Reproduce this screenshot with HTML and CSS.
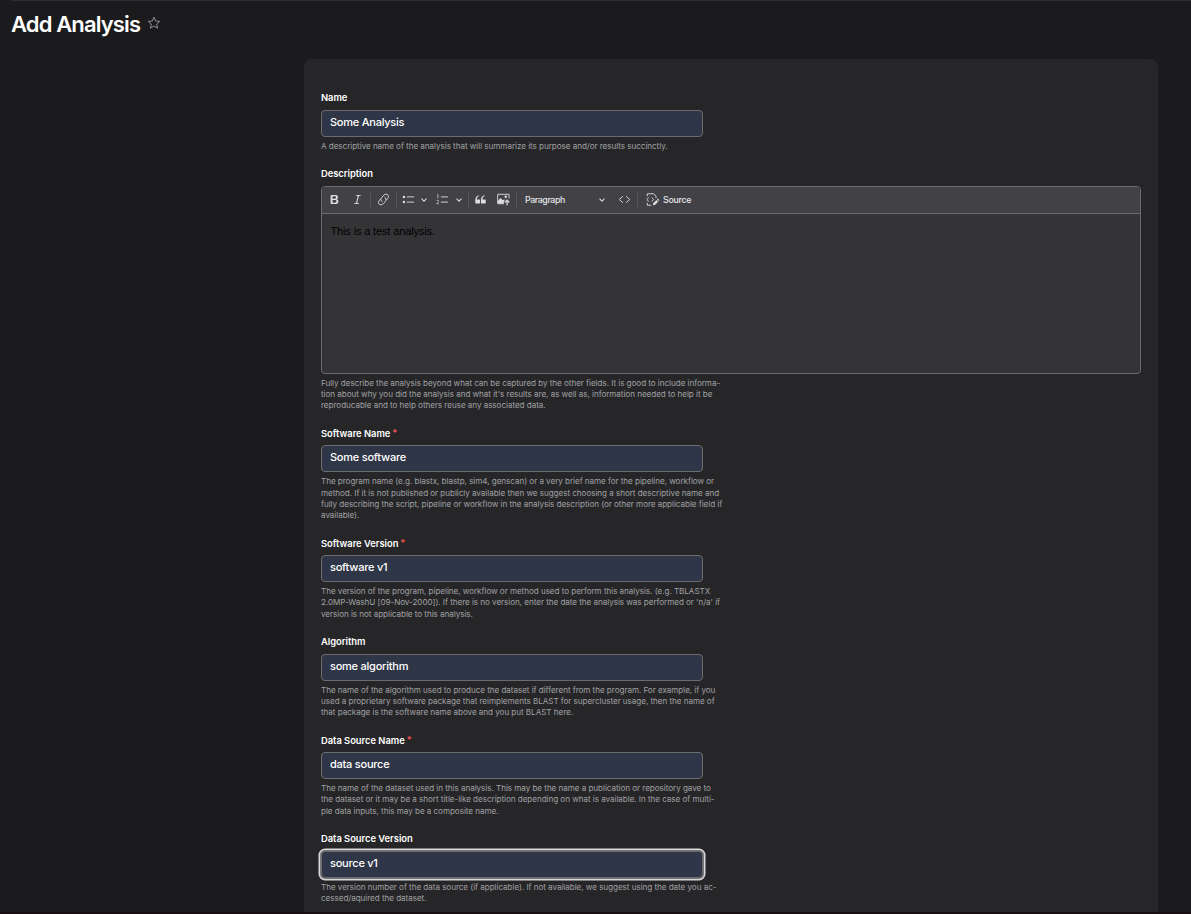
FILE: index.html
```
<!DOCTYPE html>
<html lang="en">
<head>
<meta charset="utf-8">
<title>Add Analysis</title>
<link rel="stylesheet" href="styles.css">
</head>
<body>
<div class="top-rule"></div>
<header class="page-header">
  <h1 class="page-title">Add Analysis</h1>
  <svg class="star" viewBox="0 0 14 14"><path d="M7 1.2 8.7 5 12.7 5.4 9.7 8 10.6 12.2 7 10.1 3.4 12.2 4.3 8 1.3 5.4 5.3 5Z"/></svg>
</header>
<main class="card">
  <div class="field">
    <label class="label">Name</label>
    <div class="input">Some Analysis</div>
    <p class="help">A descriptive name of the analysis that will summarize its purpose and/or results succinctly.</p>
  </div>
  <div class="field">
    <label class="label">Description</label>
    <div class="editor">
      <div class="toolbar">
        <svg class="ic bold" viewBox="0 0 20 20"><path class="fill" d="M10.187 17H5.773c-.637 0-1.092-.138-1.364-.415-.273-.277-.409-.718-.409-1.323V4.738c0-.617.14-1.062.419-1.332.279-.27.73-.406 1.354-.406h4.68c.69 0 1.288.041 1.793.124.506.083.96.242 1.36.478.341.197.644.447.906.75a3.262 3.262 0 0 1 .808 2.162c0 1.401-.722 2.426-2.167 3.075C15.05 10.175 16 11.315 16 13.01a3.756 3.756 0 0 1-2.296 3.504 6.1 6.1 0 0 1-1.517.377c-.571.073-1.238.11-2 .11zm-.217-6.217H7v4.087h3.069c1.977 0 2.965-.69 2.965-2.072 0-.707-.256-1.22-.768-1.537-.512-.319-1.277-.478-2.296-.478zM7 5.13v3.619h2.606c.729 0 1.292-.067 1.69-.2a1.6 1.6 0 0 0 .91-.765c.165-.267.247-.566.247-.897 0-.707-.26-1.176-.778-1.409-.519-.232-1.31-.348-2.375-.348H7z"/></svg>
        <svg class="ic italic" viewBox="0 0 20 20"><path class="fill" d="m9.586 14.633.021.004c-.036.335.095.655.393.962.082.083.173.15.274.201h1.474a.6.6 0 1 1 0 1.2H5.304a.6.6 0 0 1 0-1.2h1.15c.474-.07.809-.182 1.005-.334.157-.122.291-.32.404-.597l2.416-9.55a1.053 1.053 0 0 0-.281-.823 1.12 1.12 0 0 0-.442-.296H8.15a.6.6 0 0 1 0-1.2h6.443a.6.6 0 1 1 0 1.2h-1.195c-.376.056-.65.155-.823.296-.215.175-.423.439-.623.79l-2.366 9.347z"/></svg>
        <i class="sep sep-a"></i>
        <svg class="ic link" viewBox="0 0 20 20"><path class="line" d="M8.500 13.500C5.500 12.500 5.500 8.500 7.500 6.500l3-3.200c2-2 4.700-2 6.200-.5s1.300 4.200-.5 6l-2 2.200M11.500 6.500c3 1 3 5 1 7l-3 3.200c-2 2-4.700 2-6.200.5s-1.300-4.200.5-6l2-2.200"/></svg>
        <i class="sep sep-b"></i>
        <svg class="ic list" viewBox="0 0 20 20"><path class="line" d="M7.500 6H18.500M7.500 14H18.500"/><circle class="fill" cx="3" cy="6" r="1.900"/><circle class="fill" cx="3" cy="14" r="1.900"/></svg>
        <svg class="chev chev-a" viewBox="0 0 8 8"><path d="M1.500 2.700 4 5.200 6.500 2.700"/></svg>
        <svg class="ic list numbered" viewBox="0 0 20 20"><path class="line" d="M7.500 6H18.500M7.500 14H18.500"/><path class="thin" d="M1.500 3.500 3 2.500V8M1.200 12.200c.2-1.500 2.900-1.500 2.900.1 0 1.300-2.700 2.700-2.900 4.200h3.200"/></svg>
        <svg class="chev chev-b" viewBox="0 0 8 8"><path d="M1.500 2.700 4 5.200 6.500 2.700"/></svg>
        <i class="sep sep-c"></i>
        <svg class="ic quote" viewBox="0 0 20 20"><path class="fill" d="M2 10.423a6.500 6.500 0 0 1 6.056-6.408l.038.670C5.448 5.423 4.354 7.663 4.220 10H8.500c.552 0 .8.432.8.986v4.511c0 .554-.448.803-1 .803H3c-.552 0-1-.449-1-1.003v-4.874zm8.700 0a6.500 6.500 0 0 1 6.056-6.408l.038.670c-2.646.739-3.740 2.979-3.873 5.315H17.200c.552 0 .8.432.8.986v4.511c0 .554-.448.803-1 .803h-5.300c-.552 0-1-.449-1-1.003v-4.874z"/></svg>
        <svg class="ic image" viewBox="0 0 20 20"><path class="line" d="M10.500 16.500H1V2H18.500V8.500"/><path class="fill" d="M1.500 16V12l4-4.500 3.500 3.500 2-1.500 1 1.500-1.500 2v3z"/><circle class="fill" cx="13.500" cy="5.800" r="1.900"/><path class="line heavy" d="M15.500 19V11.500M12 14.500l3.500-3.500 3.500 3.500"/></svg>
        <i class="sep sep-d"></i>
        <span class="tool-text paragraph">Paragraph</span>
        <svg class="chev chev-c" viewBox="0 0 8 8"><path d="M1.500 2.700 4 5.200 6.500 2.700"/></svg>
        <svg class="ic code" viewBox="0 0 20 20"><path class="line" d="M7.500 5 2 10l5.500 5M12.500 5l5.500 5-5.500 5"/></svg>
        <i class="sep sep-e"></i>
        <svg class="ic source" viewBox="0 0 20 20"><path class="line" d="M2 5V1.200h9.500L15.500 5v3M2 15v3.800h6"/><path class="line" d="M4.300 7 1.200 10l3.100 3M8.700 7l3.100 3-3.100 3"/><path class="fill" d="M10.500 19l.6-3.300 5-5 2.600 2.600-5 5zM17 9.800l1.200-1.200 2.500 2.500-1.200 1.200z"/></svg>
        <span class="tool-text">Source</span>
      </div>
      <div class="content">This is a test analysis.</div>
    </div>
    <p class="help">Fully describe the analysis beyond what can be captured by the other fields. It is good to include informa-<br>tion about why you did the analysis and what it's results are, as well as, information needed to help it be<br>reproducable and to help others reuse any associated data.</p>
  </div>
  <div class="field">
    <label class="label required">Software Name</label>
    <div class="input">Some software</div>
    <p class="help">The program name (e.g. blastx, blastp, sim4, genscan) or a very brief name for the pipeline, workflow or<br>method. If it is not published or publicly available then we suggest choosing a short descriptive name and<br>fully describing the script, pipeline or workflow in the analysis description (or other more applicable field if<br>available).</p>
  </div>
  <div class="field">
    <label class="label required">Software Version</label>
    <div class="input">software v1</div>
    <p class="help">The version of the program, pipeline, workflow or method used to perform this analysis. (e.g. TBLASTX<br>2.0MP-WashU [09-Nov-2000]). If there is no version, enter the date the analysis was performed or 'n/a' if<br>version is not applicable to this analysis.</p>
  </div>
  <div class="field">
    <label class="label">Algorithm</label>
    <div class="input">some algorithm</div>
    <p class="help">The name of the algorithm used to produce the dataset if different from the program. For example, if you<br>used a proprietary software package that reimplements BLAST for supercluster usage, then the name of<br>that package is the software name above and you put BLAST here.</p>
  </div>
  <div class="field">
    <label class="label required">Data Source Name</label>
    <div class="input">data source</div>
    <p class="help">The name of the dataset used in this analysis. This may be the name a publication or repository gave to<br>the dataset or it may be a short title-like description depending on what is available. In the case of multi-<br>ple data inputs, this may be a composite name.</p>
  </div>
  <div class="field">
    <label class="label">Data Source Version</label>
    <div class="input focused">source v1</div>
    <p class="help">The version number of the data source (if applicable). If not available, we suggest using the date you ac-<br>cessed/aquired the dataset.</p>
  </div>
</main>
</body>
</html>
```
FILE: styles.css
```
* { box-sizing: border-box; }
body {
  margin: 0;
  height: 914px;
  overflow: hidden;
  display: flex;
  flex-direction: column;
  background: #1b1b1d;
  color: #fff;
  font-family: Inter, "Liberation Sans", sans-serif;
  border-bottom: 2px solid #1a0d12;
}
.top-rule { height: 1px; flex: none; margin-left: 11px; background: #2e2e30; }
.page-header { display: flex; flex: none; height: 58px; padding: 9px 0 0 11px; }
.page-title { margin: 0; font-size: 22px; line-height: 28px; font-weight: 600; letter-spacing: -0.87px; }
.star { width: 14px; height: 14px; margin: 6px 0 0 7px; fill: none; stroke: #909092; stroke-width: 1; }
.card {
  flex: none;
  width: 854px;
  height: 870px;
  margin-left: 304px;
  padding: 32.1px 17px 0;
  border-radius: 8px;
  background: #262628;
}
.field { margin-bottom: 15.4px; }
.label { display: block; height: 13px; margin-bottom: 5.6px; font-size: 9.4px; line-height: 13px; font-weight: 600; letter-spacing: -0.03px; }
.required::after { content: "*"; position: relative; top: -1px; margin-left: 2px; color: #f0524f; }
.input {
  width: 382px;
  height: 27px;
  padding: 0 8px;
  border: 1px solid #6c6c70;
  border-radius: 4px;
  background: #2f3647;
  font-size: 11px;
  line-height: 23.4px;
  font-weight: 500;
  letter-spacing: -0.24px;
}
.focused { box-shadow: 0 0 0 1px #77777a, 0 0 0 2.5px #d8d8da; }
.help { margin: 4.05px 0 0; font-size: 8.1px; line-height: 11.17px; letter-spacing: -0.045px; color: #a0a0a3; white-space: nowrap; }
.editor {
  height: 188px;
  margin-bottom: 4px;
  border: 1px solid #6c6c70;
  border-radius: 4px;
  background: #343436;
  overflow: hidden;
}
.toolbar {
  display: flex;
  align-items: center;
  height: 27px;
  padding-left: 6px;
  border-bottom: 1px solid #6c6c70;
  background: #414146;
}
.ic { width: 13px; height: 13px; flex: none; overflow: visible; }
.fill { fill: #dedee0; }
.line { fill: none; stroke: #d4d4d6; stroke-width: 1.5; }
.heavy { stroke-width: 2; }
.thin { fill: none; stroke: #d4d4d6; stroke-width: 1.2; }
.italic { margin-left: 10px; }
.sep { flex: none; width: 1px; height: 16px; background: #55555a; }
.sep-a { margin: 0 6px 0 6px; }
.sep-b { margin: 0 5px 0 6px; }
.chev { width: 8px; height: 8px; flex: none; fill: none; stroke: #d4d4d6; stroke-width: 1.1; }
.chev-a { margin: 0 8px 0 5px; }
.chev-b { margin: 0 5px 0 6px; }
.sep-c { margin-right: 5px; }
.image { margin-left: 10px; }
.sep-d { margin: 0 8px 0 6px; }
.tool-text { font-size: 8.8px; line-height: 12px; font-weight: 500; letter-spacing: -0.27px; color: #e6e6e8; }
.paragraph { width: 73px; letter-spacing: -0.4px; }
.code { margin: 0 6px 0 12px; }
.sep-e { margin-right: 8px; }
.source { margin-right: 4px; }
.content { padding: 10px 8.5px; color: #000; font-family: "Liberation Sans", Arial, sans-serif; font-size: 11px; line-height: 14px; letter-spacing: -0.14px; }
```
